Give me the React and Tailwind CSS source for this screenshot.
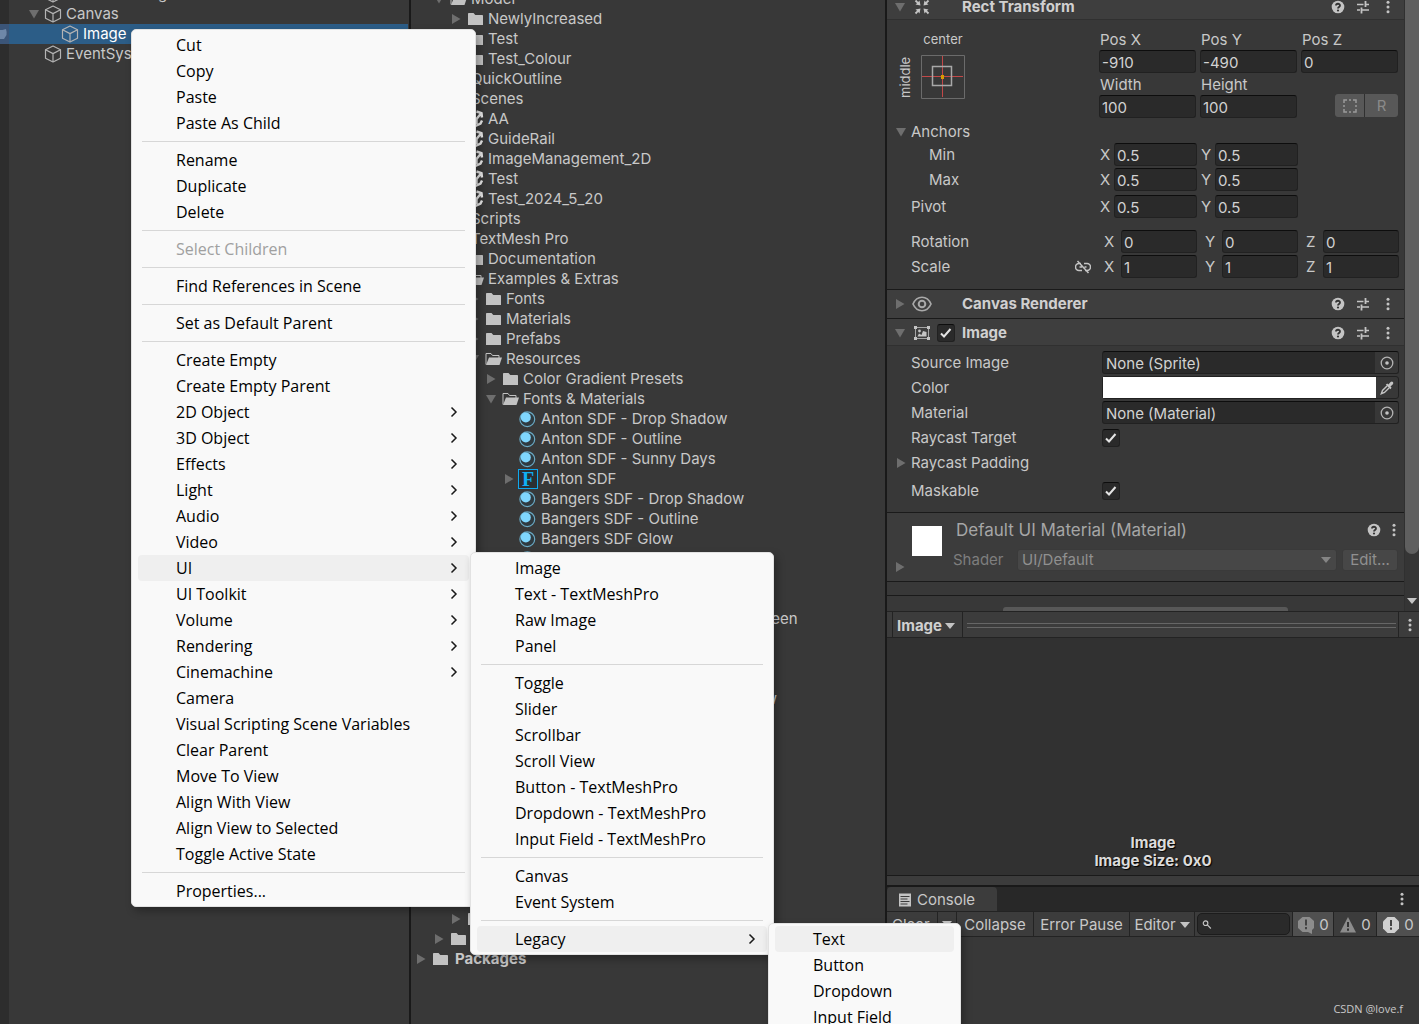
import React from "react";

/* ---------- icons ---------- */

const Triangle = ({ open, className = "text-[#6e6e6e]" }) => (
  <svg width="12" height="12" viewBox="0 0 12 12" fill="currentColor" className={"shrink-0 " + className}>
    {open ? <path d="M1 2h10L6 10.5z" /> : <path d="M2 1v10l8.5-5z" />}
  </svg>
);

const Caret = ({ className = "text-[#c4c4c4]" }) => (
  <svg width="10" height="6" viewBox="0 0 10 6" fill="currentColor" className={"shrink-0 " + className}>
    <path d="M0 0h10L5 6z" />
  </svg>
);

const Cube = () => (
  <svg width="18" height="18" viewBox="0 0 18 18" fill="none" stroke="#b4b4b4" strokeWidth="1.2" strokeLinejoin="round" className="shrink-0">
    <path d="M9 1l7.5 3.8v8.4L9 17l-7.5-3.8V4.8z" />
    <path d="M1.5 4.8L9 8.6l7.5-3.8M9 8.6V17" />
  </svg>
);

const Folder = () => (
  <svg width="17" height="14" viewBox="0 0 17 14" fill="#c2c2c2">
    <path d="M1 1.800Q1 1 1.800 1H6.500l1.800 2h6.900q.8 0 .8.800V13H1z" />
  </svg>
);

const FolderOpen = () => (
  <svg width="18" height="14" viewBox="0 0 18 14">
    <path d="M2 12.500v-11h5L8.500 3.500H15V6" fill="none" stroke="#c2c2c2" strokeWidth="1" />
    <path d="M5 5.500h13L15.500 13H2z" fill="#c2c2c2" />
  </svg>
);

const SceneIcon = () => (
  <svg width="18" height="18" viewBox="0 0 18 18" fill="none" stroke="#e8e8e8" strokeWidth="2.400">
    <path d="M10.500 1.500l5 1.700L16 7.500M15 3.500L10.500 9v5M16 10.500l-1.500 3-5 2.500" />
    <path d="M7.500 1.500L2.500 4.500v8l5 4M2.500 6l5 3v5" />
  </svg>
);

const MaterialIcon = () => (
  <svg width="18" height="17" viewBox="0 0 18 17">
    <circle cx="8.300" cy="8.200" r="7.400" fill="#2f3a40" stroke="#69a9c4" strokeWidth="1.200" />
    <circle cx="6.800" cy="6.400" r="5" fill="#7fd6fd" />
  </svg>
);

const FontIcon = () => (
  <span className="flex size-5 items-center justify-center border border-[#0fa8ee] bg-[#2b2f33] font-['Liberation_Serif',serif] text-[20px] font-bold leading-none text-[#0fb0f5]">
    F
  </span>
);

const HelpIcon = () => (
  <svg width="14" height="14" viewBox="0 0 14 14">
    <circle cx="7" cy="7" r="6.3" fill="#c4c4c4" />
    <path d="M5 5.500C5 3.200 9 3.200 9 5.400 9 7 7 6.800 7 8.400" fill="none" stroke="#333" strokeWidth="1.800" />
    <circle cx="7" cy="10.500" r="1.100" fill="#333" />
  </svg>
);

const PresetIcon = () => (
  <svg width="14" height="14" viewBox="0 0 14 14" fill="none" stroke="#c4c4c4">
    <path d="M1 4.500h6.500M9 4.500h4M1 10h3M6 10h7" strokeWidth="1.300" />
    <path d="M9.500 1v6M5.500 7.500v6" strokeWidth="1.800" />
  </svg>
);

const Dots = () => (
  <svg width="4" height="14" viewBox="0 0 4 14" fill="#c4c4c4">
    <circle cx="2" cy="2.200" r="1.500" />
    <circle cx="2" cy="7" r="1.500" />
    <circle cx="2" cy="11.800" r="1.500" />
  </svg>
);

const EyeIcon = () => (
  <svg width="20" height="16" viewBox="0 0 20 16" fill="none" stroke="#a9a9a9">
    <path d="M1 8C5-1 15-1 19 8 15 17 5 17 1 8z" strokeWidth="1.700" />
    <circle cx="10" cy="8" r="3.300" strokeWidth="2" />
  </svg>
);

const RectIcon = () => (
  <svg width="16" height="16" viewBox="0 0 16 16" fill="#c4c4c4">
    <path d="M6.500 6.500L1.500 5.500 3 4.200.8 2.200 2.200.8l2 2.200L5.500 1.500zM9.500 6.500l1-5L11.800 3l2-2.200 1.400 1.400-2.200 2 1.500 1.300zM6.500 9.500l-5 1L3 11.800.8 13.800l1.400 1.400 2-2.200 1.300 1.500zM9.500 9.500l1 5 1.300-1.500 2 2.200 1.400-1.400-2.200-2 1.500-1.300z" />
  </svg>
);

const ImageIcon = () => (
  <svg width="18" height="16" viewBox="0 0 18 16" fill="#c4c4c4">
    <path d="M2.500 2.500h13v11h-13z" fill="none" stroke="#a4a4a4" />
    <path d="M1 1h3v3H1zM14 1h3v3h-3zM1 12h3v3H1zM14 12h3v3h-3z" />
    <path d="M4.500 11.500l1.500-3 2.500 1.500 1.500-4 3.500 1v4.500z" />
    <circle cx="6.500" cy="6" r="1.400" />
  </svg>
);

const LinkOff = () => (
  <svg width="16" height="14" viewBox="0 0 16 14" fill="none" stroke="#c4c4c4" strokeWidth="1.500">
    <path d="M6 3.500H4a3.500 3.500 0 0 0 0 7h3M9 3.500h3a3.500 3.500 0 0 1 0 7h-2M4.500 7H7M9.500 7h2M2.500 1l11 12" />
  </svg>
);

const PickerIcon = () => (
  <svg width="14" height="14" viewBox="0 0 14 14">
    <circle cx="7" cy="7" r="5.800" fill="none" stroke="#b4b4b4" strokeWidth="1.300" />
    <circle cx="7" cy="7" r="1.800" fill="#c4c4c4" />
  </svg>
);

const Dropper = () => (
  <svg width="14" height="14" viewBox="0 0 14 14">
    <path d="M7 5L2.500 9.500 1.300 12.700l3.200-1.200L9 7" fill="none" stroke="#c4c4c4" strokeWidth="1.400" />
    <path d="M5.800 3.800l1.400-1.300 1.200 1.100L10.600 1q1.400-.9 2.300 0t0 2.300L10.500 5.600l1.100 1.200-1.300 1.400z" fill="#c4c4c4" />
  </svg>
);

const Chevron = () => (
  <svg width="8" height="12" viewBox="0 0 8 12" fill="none" stroke="#1a1a1a" strokeWidth="1.500">
    <path d="M1.500 1.500L6 6l-4.500 4.500" />
  </svg>
);

const ConsoleIcon = () => (
  <svg width="14" height="14" viewBox="0 0 14 14">
    <path d="M1 .5h12v13H1z" fill="#c4c4c4" />
    <path d="M2.500 3.500h9M2.500 6h7M2.500 8.500h9M2.500 11h7" stroke="#3c3c3c" />
  </svg>
);

/* ---------- hierarchy ---------- */

const HierRow = ({ label, open, selected, indent }) => (
  <li className={"flex h-5 " + (selected ? "mr-px bg-[#2c5d87] text-white" : "")}>
    <span className={"flex w-[9px] shrink-0 items-center overflow-hidden " + (selected ? "bg-[#3b5578]" : "bg-[#2d2d2d]")}>
      {selected && (
        <svg width="7" height="12" viewBox="0 0 7 12" fill="#6e87a8">
          <path d="M0 2h2.500L6 1q1 3 .5 6L4 11H0z" />
        </svg>
      )}
    </span>
    <span className={"flex min-w-0 items-center gap-1 " + indent}>
      <span className="flex w-3 shrink-0">{open && <Triangle open />}</span>
      <Cube />
      <span className="whitespace-nowrap">{label}</span>
    </span>
  </li>
);

const Hierarchy = () => (
  <section className="min-w-0 overflow-hidden border-r-2 border-[#191919] bg-[#383838]">
    <ul className="-mt-4">
      <HierRow label="Directional Light" indent="pl-[19px]" />
      <HierRow label="Canvas" open indent="pl-[19px]" />
      <HierRow label="Image" selected indent="pl-9" />
      <HierRow label="EventSystem" indent="pl-[19px]" />
    </ul>
    <div className="h-full w-[9px] bg-[#2d2d2d]" />
  </section>
);

/* ---------- project tree ---------- */

const INDENT = ["pl-1", "pl-[22px]", "pl-[39px]", "pl-[57px]", "pl-[74px]", "pl-[92px]"];
const ICONS = {
  folder: <Folder />,
  open: <FolderOpen />,
  scene: <SceneIcon />,
  mat: <MaterialIcon />,
  font: <FontIcon />,
};

/* depth, icon, label, arrow: "r" closed, "d" open */
const TREE = [
  [1, "open", "Model", "d"],
  [2, "folder", "NewlyIncreased", "r"],
  [2, "folder", "Test", "r"],
  [2, "folder", "Test_Colour", "r"],
  [1, "folder", "QuickOutline", "r"],
  [1, "open", "Scenes", "d"],
  [2, "scene", "AA"],
  [2, "scene", "GuideRail"],
  [2, "scene", "ImageManagement_2D"],
  [2, "scene", "Test"],
  [2, "scene", "Test_2024_5_20"],
  [1, "folder", "Scripts", "r"],
  [1, "open", "TextMesh Pro", "d"],
  [2, "folder", "Documentation", "r"],
  [2, "open", "Examples & Extras", "d"],
  [3, "folder", "Fonts", "r"],
  [3, "folder", "Materials", "r"],
  [3, "folder", "Prefabs", "r"],
  [3, "open", "Resources", "d"],
  [4, "folder", "Color Gradient Presets", "r"],
  [4, "open", "Fonts & Materials", "d"],
  [5, "mat", "Anton SDF - Drop Shadow"],
  [5, "mat", "Anton SDF - Outline"],
  [5, "mat", "Anton SDF - Sunny Days"],
  [5, "font", "Anton SDF", "r"],
  [5, "mat", "Bangers SDF - Drop Shadow"],
  [5, "mat", "Bangers SDF - Outline"],
  [5, "mat", "Bangers SDF Glow"],
  [5, "mat", ""],
  [5, "mat", ""],
  [5, "mat", ""],
  [5, "mat", "LiberationSans SDF - Metallic Green"],
  [5, "mat", ""],
  [5, "mat", ""],
  [5, "mat", ""],
  [5, "mat", "Oswald-Bold SDF - Drop Shadow"],
];

const TreeRow = ({ row: [depth, icon, label, arrow] }) => (
  <li className={"flex h-5 items-center whitespace-nowrap " + INDENT[depth]}>
    <span className="flex w-[15px] shrink-0">{arrow && <Triangle open={arrow === "d"} />}</span>
    <span className="mr-[3px] flex w-5 shrink-0 justify-center">{ICONS[icon]}</span>
    <span className={depth === 0 ? "pl-[2px] font-bold" : ""}>{label}</span>
  </li>
);

const Project = () => (
  <section className="min-w-0 overflow-hidden border-r-2 border-[#191919] bg-[#383838]">
    <ul className="-mt-[11px]">
      {TREE.map((r, i) => (
        <TreeRow key={i} row={r} />
      ))}
    </ul>
    <ul className="mt-[200px]">
      <TreeRow row={[2, "folder", "", "r"]} />
      <TreeRow row={[1, "folder", "", "r"]} />
      <TreeRow row={[0, "folder", "Packages", "r"]} />
    </ul>
  </section>
);

/* ---------- inspector ---------- */

const Field = ({ name, value }) => (
  <input
    aria-label={name}
    defaultValue={value}
    className="h-[23px] w-full min-w-0 rounded-[3px] border border-[#212121] border-t-[#0d0d0d] bg-[#2a2a2a] px-[2px] pt-px text-[15px] text-[#d2d2d2] outline-none"
  />
);

const Axis = ({ group, axis, value, wide }) => (
  <label className="flex items-center">
    <span className={wide ? "w-[22px] shrink-0 pl-[5px]" : "w-[15px] shrink-0 pl-px"}>{axis}</span>
    <Field name={group + " " + axis} value={value} />
  </label>
);

const Row = ({ label, indent = "pl-6", arrow, extra, children, className = "" }) => (
  <div className={"grid h-[25px] grid-cols-[212px_1fr] items-center pr-[5px] " + className}>
    <div className={"relative flex items-center " + indent}>
      {arrow && (
        <span className="absolute left-2">
          <Triangle open={arrow === "d"} />
        </span>
      )}
      <span className="flex-1">{label}</span>
      {extra}
    </div>
    {children}
  </div>
);

const Three = ({ children }) => <div className="grid grid-cols-3 gap-[3px]">{children}</div>;

const Check = ({ name }) => (
  <span className="relative flex size-[18px]">
    <input
      type="checkbox"
      aria-label={name}
      defaultChecked
      className="peer size-[18px] appearance-none rounded-[3px] border border-[#212121] border-t-[#0d0d0d] bg-[#2a2a2a]"
    />
    <svg width="18" height="18" viewBox="0 0 18 18" fill="none" stroke="#e4e4e4" strokeWidth="2" className="pointer-events-none absolute inset-0 hidden peer-checked:block">
      <path d="M4 9.500l3 3L13.500 5" />
    </svg>
  </span>
);

const HeaderTools = () => (
  <span className="ml-auto flex items-center">
    <button aria-label="Help" className="w-[14px]"><HelpIcon /></button>
    <button aria-label="Presets" className="ml-[11px] w-[14px]"><PresetIcon /></button>
    <button aria-label="More" className="ml-4 w-1"><Dots /></button>
  </span>
);

const CompHeader = ({ title, icon, open, check, className }) => (
  <header className={"flex items-center bg-[#3e3e3e] pl-[7px] pr-[14px] " + className}>
    <Triangle open={open} />
    <span className="ml-[5px] flex w-[22px] justify-center">{icon}</span>
    <span className="ml-1 w-[25px]">{check && <Check name={title} />}</span>
    <h2 className="font-bold text-[#d0d0d0]">{title}</h2>
    <HeaderTools />
  </header>
);

const AnchorWidget = () => (
  <div className="grid grid-cols-[24px_44px] pl-[10px] pt-2">
    <span />
    <span className="h-[26px] text-center text-[13px] leading-5">center</span>
    <span className="flex w-4 rotate-180 items-center justify-center text-[13px] leading-4 [writing-mode:vertical-rl]">middle</span>
    <svg width="44" height="44" viewBox="0 0 44 44" fill="none">
      <path d="M.5.5h43v43H.5z" stroke="#6b6b6b" />
      <path d="M21.500 1v41M1 21.500h41" stroke="#c24848" />
      <path d="M11.500 11.500h19v19h-19z" stroke="#a8a8a8" strokeWidth="1.500" />
      <path d="M20 20h3v4h-3z" fill="#d89a00" />
    </svg>
  </div>
);

const RectTransform = () => (
  <div className="pb-[10px]">
    <div className="grid grid-cols-[212px_1fr] pr-[6px] pt-[10px]">
      <div className="-mt-[9px]"><AnchorWidget /></div>
      <div className="grid grid-cols-3 content-start gap-x-1">
        {[["Pos X", "-910"], ["Pos Y", "-490"], ["Pos Z", "0"]].map(([l, v]) => (
          <label key={l} className="block">
            <span className="block h-5 pl-px leading-5">{l}</span>
            <Field name={l} value={v} />
          </label>
        ))}
        {[["Width", "100"], ["Height", "100"]].map(([l, v]) => (
          <label key={l} className="block">
            <span className="block h-[22px] pl-px leading-[23px]">{l}</span>
            <Field name={l} value={v} />
          </label>
        ))}
        <div className="mb-px flex h-[23px] gap-px self-end justify-self-end overflow-hidden rounded-[3px] bg-[#303030] text-[#8a8a8a]">
          <button aria-label="Blueprint mode" className="flex w-[29px] items-center justify-center bg-[#585858]">
            <svg width="14" height="14" viewBox="0 0 14 14" fill="none" stroke="#9a9a9a" strokeWidth="1.500">
              <path d="M1 4V1h3M6 1h2M10 1h3v3M13 6v2M13 10v3h-3M8 13H6M4 13H1v-3M1 8V6" />
            </svg>
          </button>
          <button className="w-[33px] bg-[#585858] text-[15px]">R</button>
        </div>
      </div>
    </div>
    <Row label="Anchors" arrow="d" className="mt-px" />
    <div className="-mt-[2px]">
      <Row label="Min" indent="pl-[42px]">
        <Three>
          <Axis group="Min" axis="X" value="0.5" />
          <Axis group="Min" axis="Y" value="0.5" />
        </Three>
      </Row>
      <Row label="Max" indent="pl-[42px]">
        <Three>
          <Axis group="Max" axis="X" value="0.5" />
          <Axis group="Max" axis="Y" value="0.5" />
        </Three>
      </Row>
    </div>
    <Row label="Pivot" className="mt-[2px]">
      <Three>
        <Axis group="Pivot" axis="X" value="0.5" />
        <Axis group="Pivot" axis="Y" value="0.5" />
      </Three>
    </Row>
    <Row label="Rotation" className="mt-[10px]">
      <Three>
        <Axis group="Rotation" axis="X" value="0" wide />
        <Axis group="Rotation" axis="Y" value="0" wide />
        <Axis group="Rotation" axis="Z" value="0" wide />
      </Three>
    </Row>
    <Row label="Scale" extra={<button aria-label="Constrain proportions" className="mr-2"><LinkOff /></button>}>
      <Three>
        <Axis group="Scale" axis="X" value="1" wide />
        <Axis group="Scale" axis="Y" value="1" wide />
        <Axis group="Scale" axis="Z" value="1" wide />
      </Three>
    </Row>
  </div>
);

const ObjectField = ({ name, value }) => (
  <div className="ml-[3px] flex h-[23px] overflow-hidden rounded-[3px] border border-[#212121] border-t-[#0d0d0d] bg-[#2a2a2a]">
    <input aria-label={name} readOnly value={value} className="min-w-0 flex-1 bg-transparent px-[3px] pt-[2px] text-[#d2d2d2] outline-none" />
    <button aria-label={"Select " + name} className="flex w-[23px] items-center justify-center bg-[#373737]"><PickerIcon /></button>
  </div>
);

const ImageBody = () => (
  <div className="pb-[9px] pt-1">
    <Row label="Source Image"><ObjectField name="Source Image" value="None (Sprite)" /></Row>
    <Row label="Color">
      <div className="ml-[3px] flex h-[23px] rounded-[3px] border border-[#212121]">
        <button aria-label="Color" className="flex-1 bg-white" />
        <button aria-label="Pick color" className="flex w-[22px] items-center justify-center"><Dropper /></button>
      </div>
    </Row>
    <Row label="Material"><ObjectField name="Material" value="None (Material)" /></Row>
    <Row label="Raycast Target"><span className="pl-[3px]"><Check name="Raycast Target" /></span></Row>
    <Row label="Raycast Padding" arrow="r" />
    <Row label="Maskable" className="mt-[3px]"><span className="pl-[3px]"><Check name="Maskable" /></span></Row>
  </div>
);

const MaterialBlock = () => (
  <div className="flex h-[69px] border-b border-[#1a1a1a] bg-[#3c3c3c] pr-[6px]">
    <span className="flex w-[25px] shrink-0 items-end pb-2 pl-[7px]"><Triangle /></span>
    <span className="mt-[13px] size-[30px] shrink-0 bg-white" />
    <div className="ml-[11px] flex-1 pt-[5px]">
      <div className="flex h-[23px] items-center pl-[3px] pr-[2px] text-[17px] text-[#a6a6a6]">
        <span className="flex-1">Default UI Material (Material)</span>
        <button aria-label="Help"><HelpIcon /></button>
        <button aria-label="More" className="ml-[11px] w-1"><Dots /></button>
      </div>
      <div className="mt-[7px] flex h-[23px] items-center text-[#7e7e7e]">
        <label htmlFor="shader" className="w-[64px]">Shader</label>
        <span className="relative flex flex-1 items-center">
          <select id="shader" className="h-[22px] w-full appearance-none rounded-[3px] border border-[#3a3a3a] bg-[#474747] pl-1 text-[#909090]">
            <option>UI/Default</option>
          </select>
          <Caret className="pointer-events-none absolute right-[6px] text-[#858585]" />
        </span>
        <button className="ml-[5px] h-[22px] w-[56px] rounded-[3px] border border-[#3a3a3a] bg-[#474747] text-[#909090]">Edit...</button>
      </div>
    </div>
  </div>
);

const Inspector = () => (
  <div className="flex h-[611px] shrink-0 overflow-hidden">
    <div className="min-w-0 flex-1">
      <CompHeader title="Rect Transform" icon={<RectIcon />} open className="-mt-[6px] h-[26px] border-b border-[#303030]" />
      <RectTransform />
      <CompHeader title="Canvas Renderer" icon={<EyeIcon />} className="h-[30px] border-y border-[#1a1a1a]" />
      <CompHeader title="Image" icon={<ImageIcon />} open check className="h-[27px] border-b border-[#303030] pt-px" />
      <div className="border-b border-[#1a1a1a]"><ImageBody /></div>
      <MaterialBlock />
      <div className="h-[14px] border-b border-[#1a1a1a]" />
      <div className="flex justify-center pt-[11px]">
        <button aria-label="Add Component" className="h-6 w-[285px] rounded-[3px] bg-[#585858]" />
      </div>
    </div>
    <div className="flex w-[15px] flex-col items-center border-l border-[#303030] bg-[#353535]">
      <span className="h-[554px] w-full rounded-b-full bg-[#5f5f5f]" />
      <span className="mt-auto pb-[7px]"><Caret /></span>
    </div>
  </div>
);

const Preview = () => (
  <>
    <div className="flex h-[27px] shrink-0 items-stretch border-y border-[#232323] bg-[#3c3c3c] pl-[5px]">
      <button className="flex w-[71px] items-center gap-[3px] border-x border-[#232323] pl-1 pt-[2px] font-bold text-[#d0d0d0]">
        Image <Caret />
      </button>
      <span className="ml-1 mr-[2px] flex flex-1 flex-col justify-center gap-[3px] pt-px">
        <span className="h-px bg-[#666]" />
        <span className="h-px bg-[#666]" />
      </span>
      <button aria-label="More" className="flex w-[21px] items-center justify-center border-l border-[#232323] pl-px"><Dots /></button>
    </div>
    <div className="flex h-[237px] shrink-0 flex-col justify-end bg-[#313131] pb-[5px] text-center font-bold leading-[18px] text-[#dcdcdc] [text-shadow:1px_1px_1px_#000]">
      <p>Image</p>
      <p>Image Size: 0x0</p>
    </div>
    <div className="h-[10px] shrink-0 border-t border-[#1a1a1a] bg-[#3c3c3c]" />
  </>
);

const Console = () => (
  <div className="flex flex-1 flex-col border-t-2 border-[#191919]">
    <div className="flex h-6 items-center bg-[#282828] pr-[15px]">
      <button className="flex h-full w-[110px] items-center gap-[5px] rounded-t-[4px] bg-[#3c3c3c] pl-[11px] pt-[2px]">
        <ConsoleIcon /> Console
      </button>
      <button aria-label="More" className="ml-auto"><Dots /></button>
    </div>
    <div className="flex h-[26px] items-stretch border-y border-[#232323] bg-[#3c3c3c]">
      <button className="w-[51px] border-r border-[#232323] pl-[5px] pt-[2px] text-left">Clear</button>
      <button aria-label="Clear options" className="flex w-[19px] items-center justify-center border-r border-[#232323]"><Caret /></button>
      <button className="w-[77px] border-r border-[#232323] pt-[2px]">Collapse</button>
      <button className="w-[96px] border-r border-[#232323] pt-[2px]">Error Pause</button>
      <button className="flex w-[65px] items-center justify-center gap-1 border-r border-[#232323] pt-px">Editor <Caret /></button>
      <label className="mx-[2px] my-px flex min-w-0 flex-1 items-center rounded-[5px] border border-[#1c1c1c] bg-[#2a2a2a] pl-1">
        <svg width="11" height="11" viewBox="0 0 11 11" fill="none" stroke="#c4c4c4" strokeWidth="1.300">
          <circle cx="4" cy="4" r="2.600" />
          <path d="M6 6l4 4" />
        </svg>
        <input aria-label="Search console" className="w-full min-w-0 bg-transparent outline-none" />
      </label>
      <button className="flex w-[42px] items-center justify-center gap-1 border-x border-[#232323] bg-[#505050] pt-px">
        <svg width="18" height="18" viewBox="0 0 18 18">
          <path d="M5.500 1h7L17 5v7l-2 2v4l-4-2H5.500L1 12V5z" fill="#8c8c8c" />
          <path d="M9 3.500v6M9 11v2.200" stroke="#444" strokeWidth="2" />
        </svg>
        0
      </button>
      <button className="flex w-[43px] items-center justify-center gap-1 border-r border-[#232323] pt-px">
        <svg width="18" height="18" viewBox="0 0 18 18">
          <path d="M9 1l8 15.500H1z" fill="#8c8c8c" />
          <path d="M9 6v5M9 12.500v2.200" stroke="#333" strokeWidth="2" />
        </svg>
        0
      </button>
      <button className="flex w-[42px] items-center justify-center gap-1 bg-[#505050] pt-px">
        <svg width="18" height="18" viewBox="0 0 18 18">
          <path d="M5.500 1h7L17 5.500v7L12.500 17h-7L1 12.500v-7z" fill="#d0d0d0" />
          <path d="M9 4v6M9 11.500v2.200" stroke="#444" strokeWidth="2" />
        </svg>
        0
      </button>
    </div>
    <p className="mt-auto pb-[7px] pr-4 text-right font-['Open_Sans',sans-serif] text-[11px] leading-4 text-[#c8c8c8]">CSDN @love.f</p>
  </div>
);

/* ---------- context menus ---------- */

/* "-" is a separator, a leading ">" marks a submenu, a leading "~" a disabled entry */
const MAIN = [
  "Cut", "Copy", "Paste", "Paste As Child", "-",
  "Rename", "Duplicate", "Delete", "-",
  "~Select Children", "-",
  "Find References in Scene", "-",
  "Set as Default Parent", "-",
  "Create Empty", "Create Empty Parent", ">2D Object", ">3D Object", ">Effects", ">Light", ">Audio", ">Video",
  ">UI", ">UI Toolkit", ">Volume", ">Rendering", ">Cinemachine", "Camera", "Visual Scripting Scene Variables",
  "Clear Parent", "Move To View", "Align With View", "Align View to Selected", "Toggle Active State", "-",
  "Properties...",
];
const UI_MENU = [
  "Image", "Text - TextMeshPro", "Raw Image", "Panel", "-",
  "Toggle", "Slider", "Scrollbar", "Scroll View", "Button - TextMeshPro", "Dropdown - TextMeshPro", "Input Field - TextMeshPro", "-",
  "Canvas", "Event System", "-",
  ">Legacy",
];
const LEGACY = ["Text", "Button", "Dropdown", "Input Field"];

const Menu = ({ items, active, className }) => (
  <div
    role="menu"
    className={
      "absolute rounded-[5px] border border-[#e2e2e2] bg-[#f9f9f9] pb-px pt-[2px] font-['Open_Sans',sans-serif] text-[16px] text-black shadow-[3px_4px_8px_rgba(0,0,0,0.3)] " +
      className
    }
  >
    {items.map((it, i) => {
      if (it === "-") return <hr key={i} className="mx-[10px] my-[5px] border-[#d7d7d7]" />;
      const sub = it[0] === ">";
      const off = it[0] === "~";
      const label = sub || off ? it.slice(1) : it;
      return (
        <div key={i} className="px-[6px]">
          <button
            role="menuitem"
            disabled={off}
            className={
              "flex h-[26px] w-full items-center justify-between rounded-[4px] pl-[38px] pr-[11px] text-left " +
              (label === active ? "bg-[#efefef] " : "") +
              (off ? "text-[#a0a0a0]" : "")
            }
          >
            {label}
            {sub && <Chevron />}
          </button>
        </div>
      );
    })}
  </div>
);

export default function App() {
  return (
    <main className="relative grid h-screen grid-cols-[411fr_476fr_532fr] overflow-hidden bg-[#383838] font-[Inter,sans-serif] text-[15px] leading-5 text-[#c8c8c8]">
      <Hierarchy />
      <Project />
      <section className="flex min-w-0 flex-col overflow-hidden">
        <Inspector />
        <Preview />
        <Console />
      </section>
      <Menu items={MAIN} active="UI" className="left-[131px] top-[29px] h-[878px] w-[345px]" />
      <Menu items={UI_MENU} active="Legacy" className="left-[470px] top-[552px] h-[403px] w-[304px]" />
      <Menu items={LEGACY} active="Text" className="left-[768px] top-[923px] w-[193px]" />
    </main>
  );
}
